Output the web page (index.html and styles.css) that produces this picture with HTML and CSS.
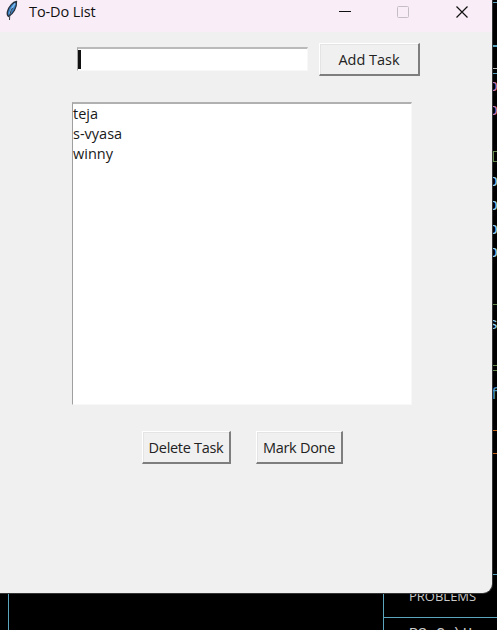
FILE: index.html
```html
<!DOCTYPE html>
<html lang="en">
<head>
<meta charset="utf-8">
<title>To-Do List</title>
<link rel="stylesheet" href="styles.css">
</head>
<body>
<div class="desktop">
  <div class="editor">
    <svg class="rules" width="497" height="630" viewBox="0 0 497 630" fill="none" shape-rendering="crispEdges">
      <path stroke="#5da5bf" d="M492 2.500h5M492 73.500h5M492 574.500h5M8.500 593v37M383.500 593v37M384 617.500h113"/>
      <path stroke="#5da5bf" stroke-width="2" d="M492 46h5"/>
      <path stroke="#bbb" d="M492 68.500h5"/>
      <path stroke="#668b4e" d="M492 304.500h5M492 365.500h5M492 370.500h5M497 151.500h-3.500v10h4"/>
      <path stroke="#c8661b" d="M492 430.500h5M492 453.500h5"/>
    </svg>
    <span class="code pink l1">p</span>
    <span class="code pink l2">p</span>
    <span class="code l3">p</span>
    <span class="code l4">p</span>
    <span class="code l5">p</span>
    <span class="code l6">p</span>
    <span class="code l7">s</span>
    <span class="code blue l8">f</span>
    <span class="panel-tab">PROBLEMS</span>
    <span class="terminal">PS C:\Us</span>
  </div>
  <main class="window">
    <header class="titlebar">
      <svg class="feather" width="14" height="22" viewBox="0 0 14 22">
        <path d="M11.500 1.500C8 2 4 6 2.500 11.500c-.6 2.500-.3 4 1 5C8 14 12 8 11.500 1.500z" fill="#397fc4" stroke="#29333f" stroke-width="1.300"/>
        <path d="M10 3.500C7.500 6.500 5.500 10 4.500 14" fill="none" stroke="#82bbed" stroke-width="1.500"/>
        <path d="M7.500 8C5.500 11 4.500 15 4.500 20" fill="none" stroke="#333b43"/>
      </svg>
      <h1 class="title"><span>To-Do List</span></h1>
      <svg class="controls" width="160" height="24" viewBox="0 0 160 24" fill="none" stroke="#111">
        <path d="M7 11.500h12"/>
        <rect x="65.500" y="6.500" width="11" height="11" rx="1" stroke="#c6bec5"/>
        <path d="M124.500 6.500l11 11M135.500 6.500l-11 11" stroke-width="1.200"/>
      </svg>
    </header>
    <div class="entry-row">
      <div class="entry"><i class="caret"></i></div>
      <button class="button add"><span>Add Task</span></button>
    </div>
    <ul class="tasks">
      <li><span>teja</span></li>
      <li><span>s-vyasa</span></li>
      <li><span>winny</span></li>
    </ul>
    <div class="actions">
      <button class="button delete"><span>Delete Task</span></button>
      <button class="button done"><span>Mark Done</span></button>
    </div>
  </main>
</div>
</body>
</html>
```
FILE: styles.css
```css
* { box-sizing: border-box; }
body { margin: 0; background: #000; font-family: "Open Sans", "Noto Sans", sans-serif; color: #191919; }
.desktop { position: relative; width: 497px; height: 630px; overflow: hidden; background: #000; }
.editor { position: absolute; inset: 0; }
.rules { display: block; }
.code { position: absolute; left: 488px; font: 17px/20px "Liberation Mono", monospace; color: #8dccf2; }
.code.pink { color: #bd78b5; }
.code.blue { color: #4b91bd; }
.l1 { top: 77px; } .l2 { top: 101px; }
.l3 { top: 172px; } .l4 { top: 196px; } .l5 { top: 220px; } .l6 { top: 243px; }
.l7 { top: 315px; } .l8 { top: 385px; left: 490px; }
.panel-tab { position: absolute; left: 409px; top: 587px; font-size: 13px; line-height: 18px; letter-spacing: 0; color: #c8c8c8; }
.terminal { position: absolute; left: 409px; top: 626px; font: 15px/18px "Liberation Mono", monospace; color: #ccc; }
.window { position: absolute; left: 0; top: 0; width: 492px; height: 593px; background: #f0f0f0; border-radius: 0 0 9px 0; box-shadow: 0 0 0 1px #343434; }
.titlebar { display: flex; align-items: flex-start; height: 32px; background: #f9eef7; padding-left: 5px; }
.feather { flex: none; }
.title { margin: 1px 0 0 10px; width: 303px; font-size: 14.500px; line-height: 22px; font-weight: 400; letter-spacing: -.1px; color: #111; }
.controls { flex: none; }
.entry-row { display: flex; height: 33px; margin: 11px 0 0 77px; }
.entry { width: 231px; height: 24px; margin-top: 4px; background: #fff; border: 1px solid #f8f8f8; border-top: 2px solid #bababa; border-left-color: #a6a6a6; }
.caret { display: block; width: 3px; height: 19px; margin-top: 1px; background: #111; }
.button { padding: 0; background: #f0f0f0; border: solid; border-width: 1px 2px 2px 1px; border-color: #fff #7e7e7e #7e7e7e #fff; box-shadow: inset 1px 1px #e4e4e4; font: 14.500px/20px "Open Sans", sans-serif; color: #222; white-space: nowrap; }
.add { width: 101px; height: 33px; margin-left: 11px; padding-top: 1px; }
.button span { display: inline-block; }
.tasks { list-style: none; width: 340px; height: 303px; margin: 26px 0 0 72px; padding: 0; background: #fff; border: 1px solid #f8f8f8; border-top: 2px solid #b0b0b0; border-left-color: #9f9f9f; font-size: 14.500px; line-height: 20px; }
.tasks li { height: 20px; letter-spacing: 0; }
.actions { display: flex; gap: 25px; margin: 26px 0 0 142px; }
.actions .button { height: 33px; padding-top: 1px; letter-spacing: -.3px; }
.delete { width: 89px; }
.done { width: 87px; }
```
